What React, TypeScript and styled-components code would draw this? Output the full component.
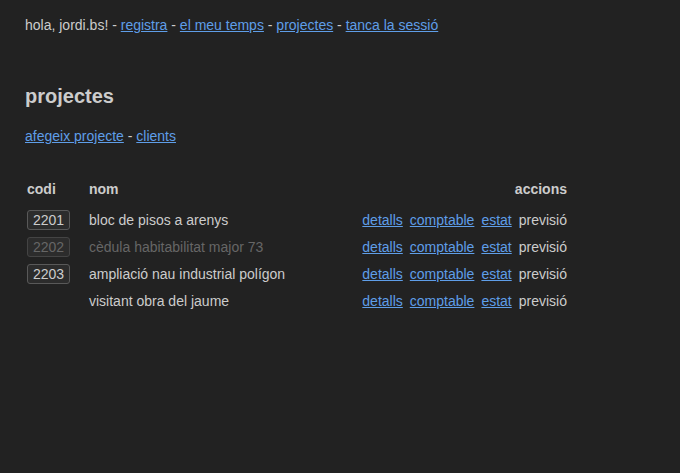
import React from "react";
import styled, { createGlobalStyle } from "styled-components";

const GlobalStyle = createGlobalStyle`
  body {
    margin: 0;
    background: #222222;
    color: #cccccc;
    font-family: "Liberation Sans", Arial, sans-serif;
    font-size: 14px;
  }
`;

const Page = styled.div`
  padding: 17px 25px;
  min-height: 473px;
  box-sizing: border-box;
`;

const Nav = styled.div`
  line-height: 16px;
`;

const Link = styled.a`
  color: #5f9ee8;
  text-decoration: underline;
  cursor: pointer;
`;

const Title = styled.h1`
  margin: 51px 0 0;
  font-size: 20px;
  line-height: 24px;
  font-weight: bold;
  color: #cccccc;
`;

const SubNav = styled.div`
  margin-top: 20px;
  line-height: 16px;
`;

const Table = styled.table`
  margin-top: 31px;
  width: 544px;
  border-collapse: collapse;
`;

const Th = styled.th<{ $align?: string }>`
  text-align: ${(p) => p.$align || "left"};
  font-weight: bold;
  height: 27px;
  padding: 0 2px 4px;
  color: #cccccc;
`;

const Row = styled.tr<{ $muted?: boolean }>`
  height: 27px;
  color: ${(p) => (p.$muted ? "#666666" : "#cccccc")};
`;

const Td = styled.td<{ $width?: string }>`
  padding: 1px 2px 0;
  width: ${(p) => p.$width || "auto"};
  vertical-align: middle;
`;

const Code = styled.span<{ $muted?: boolean }>`
  display: inline-block;
  padding: 1px 5px;
  border: 1px solid ${(p) => (p.$muted ? "#444444" : "#595959")};
  border-radius: 3px;
  background: #2c2c2c;
  line-height: 16px;
`;

const Actions = styled.div`
  display: flex;
  justify-content: flex-end;
  gap: 7px;
  color: #cccccc;
`;

const projects = [
  { code: "2201", name: "bloc de pisos a arenys" },
  { code: "2202", name: "cèdula habitabilitat major 73", muted: true },
  { code: "2203", name: "ampliació nau industrial polígon" },
  { code: "", name: "visitant obra del jaume" },
];

const App = () => {
  return (
    <Page>
      <GlobalStyle />
      <Nav>
        hola, jordi.bs! - <Link>registra</Link> - <Link>el meu temps</Link> -{" "}
        <Link>projectes</Link> - <Link>tanca la sessió</Link>
      </Nav>
      <Title>projectes</Title>
      <SubNav>
        <Link>afegeix projecte</Link> - <Link>clients</Link>
      </SubNav>
      <Table>
        <thead>
          <tr>
            <Th>codi</Th>
            <Th>nom</Th>
            <Th $align="right">accions</Th>
          </tr>
        </thead>
        <tbody>
          {projects.map((p) => (
            <Row key={p.name} $muted={p.muted}>
              <Td $width="58px">
                {p.code && <Code $muted={p.muted}>{p.code}</Code>}
              </Td>
              <Td>{p.name}</Td>
              <Td>
                <Actions>
                  <Link>detalls</Link>
                  <Link>comptable</Link>
                  <Link>estat</Link>
                  <span>previsió</span>
                </Actions>
              </Td>
            </Row>
          ))}
        </tbody>
      </Table>
    </Page>
  );
};

export default App;
